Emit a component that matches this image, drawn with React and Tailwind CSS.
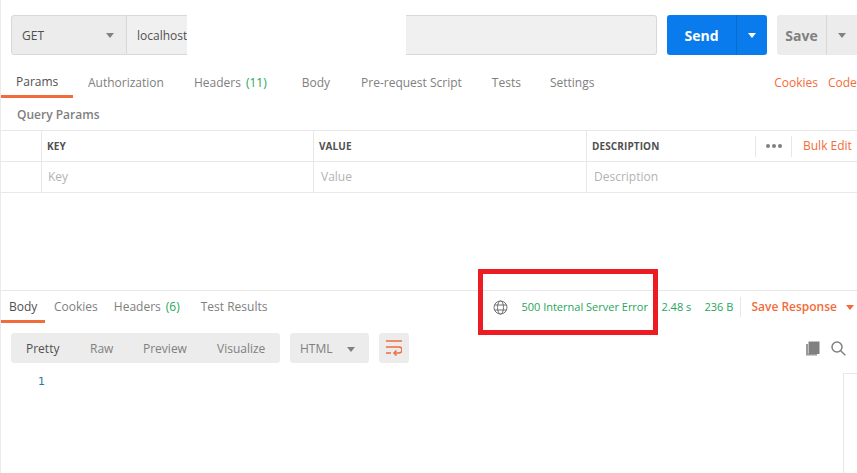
const Caret = ({ c = "border-t-[#808080]" }) => (
  <span className={`block w-0 h-0 border-l-[4px] border-r-[4px] border-t-[5px] border-l-transparent border-r-transparent ${c}`} />
);

const TopTab = ({ children, className = "" }) => (
  <div className={`h-[32px] flex items-center text-[#808080] ${className}`}>{children}</div>
);

export default function App() {
  return (
    <div className="relative w-[857px] h-[473px] overflow-hidden bg-white border-l border-[#eaeaea] text-[12px] text-[#808080] font-['Open_Sans',sans-serif]">
      {/* request bar */}
      <div className="flex h-10 mt-[15px] ml-[10px]">
        <div className="w-[116px] flex items-center justify-between pt-px pl-[10px] pr-3 bg-[#ececec] border border-[#d8d8d8] rounded-l-[3px] text-[#505050] font-medium">
          <span>GET</span>
          <Caret />
        </div>
        <div className="relative w-[530px] flex items-center pt-px pl-[10px] bg-[#f0f0f0] border border-l-0 border-[#d8d8d8] rounded-r-[3px] text-[#505050]">
          <span>localhost</span>
          <div className="absolute left-[60px] -top-px -bottom-px w-[219px] bg-white" />
        </div>
        <div className="ml-[10px] w-[100px] flex bg-[#097bed] rounded-[3px] text-white">
          <div className="w-[70px] flex items-center justify-center text-[14px] font-bold border-r border-[#0a6bcc]">Send</div>
          <div className="flex-1 flex items-center justify-center"><Caret c="border-t-white" /></div>
        </div>
        <div className="ml-[10px] w-[80px] flex bg-[#ececec] rounded-l-[3px]">
          <div className="w-[50px] flex items-center justify-center text-[14px] font-bold text-[#808080] border-r border-[#d8d8d8]">Save</div>
          <div className="flex-1 flex items-center justify-center"><Caret /></div>
        </div>
      </div>

      {/* request tabs */}
      <div className="flex items-start mt-3 h-[31px]">
        <TopTab className="px-[15px] pt-[2px] w-[72px] border-b-[3px] border-[#f26b3a] !h-[31px] !text-[#505050]">Params</TopTab>
        <TopTab className="ml-[15px]">Authorization</TopTab>
        <TopTab className="ml-[30px]">Headers<span className="ml-[5px] text-[#26a65b]">(11)</span></TopTab>
        <TopTab className="ml-[35px]">Body</TopTab>
        <TopTab className="ml-[31px]">Pre-request Script</TopTab>
        <TopTab className="ml-[30px]">Tests</TopTab>
        <TopTab className="ml-[29px]">Settings</TopTab>
        <TopTab className="ml-auto mr-[10px] !text-[#f26b3a]">Cookies</TopTab>
        <TopTab className="w-[29px] !text-[#f26b3a]">Code</TopTab>
      </div>

      {/* query params */}
      <div className="h-[32px] flex items-center pl-4 font-semibold text-[#808080] mt-px">Query Params</div>
      <div className="border-t border-[#e8e8e8] -mt-px">
        <div className="flex h-[31px] border-b border-[#e8e8e8] text-[10px] font-bold tracking-[0.1px] text-[#505050]">
          <div className="w-[41px] border-r border-[#e8e8e8]" />
          <div className="w-[272px] flex items-center pl-[5px] border-r border-[#e8e8e8]">KEY</div>
          <div className="w-[273px] flex items-center pl-[5px] border-r border-[#e8e8e8]">VALUE</div>
          <div className="flex-1 flex items-center pl-[5px]">
            <span className="w-[163px]">DESCRIPTION</span>
            <div className="h-[21px] w-[37px] flex items-center justify-center gap-[2px] border-x border-[#e8e8e8]">
              <span className="w-1 h-1 rounded-full bg-[#808080]" />
              <span className="w-1 h-1 rounded-full bg-[#808080]" />
              <span className="w-1 h-1 rounded-full bg-[#808080]" />
            </div>
            <span className="ml-[11px] text-[12px] font-normal tracking-normal text-[#f26b3a]">Bulk Edit</span>
          </div>
        </div>
        <div className="flex h-[31px] border-b border-[#e8e8e8] text-[#b3b3b3]">
          <div className="w-[41px] border-r border-[#e8e8e8]" />
          <div className="w-[272px] flex items-center pl-[6px] border-r border-[#e8e8e8]">Key</div>
          <div className="w-[273px] flex items-center pl-[7px] border-r border-[#e8e8e8]">Value</div>
          <div className="flex-1 flex items-center pl-[7px]">Description</div>
        </div>
      </div>

      {/* response */}
      <div className="mt-[97px] border-t border-[#e8e8e8]">
        <div className="flex items-start h-[32px]">
          <div className="h-[32px] w-[44px] pl-2 pt-[3px] flex items-center border-b-[3px] border-[#f26b3a] text-[#505050]">Body</div>
          <div className="h-[32px] ml-[9px] flex items-center">Cookies</div>
          <div className="h-[32px] ml-[16px] flex items-center">Headers<span className="ml-[5px] text-[#26a65b]">(6)</span></div>
          <div className="h-[32px] ml-[21px] flex items-center">Test Results</div>
          <div className="h-[32px] ml-auto flex items-center">
            <svg width="15" height="15" viewBox="0 0 15 15" fill="none" stroke="#707070" strokeWidth="1" className="mr-[13px]">
              <circle cx="7.5" cy="7.5" r="6.5" />
              <ellipse cx="7.5" cy="7.5" rx="3" ry="6.5" />
              <path d="M1.5 5h12M1.5 10h12" />
            </svg>
            <span className="w-[140px] text-[#26a65b] text-[11px]">500 Internal Server Error</span>
            <span className="w-[43px] text-[#26a65b] text-[11px]">2.48 s</span>
            <span className="w-[36px] text-[#26a65b] text-[11px]">236 B</span>
            <div className="w-px h-5 bg-[#e8e8e8]" />
            <span className="ml-[10px] text-[#f26b3a] font-semibold">Save Response</span>
            <span className="ml-[9px] mr-[3px]"><Caret c="border-t-[#f26b3a]" /></span>
          </div>
        </div>

        <div className="flex items-center h-[30px] mt-[10px] ml-[10px]">
          <div className="w-[269px] h-full flex items-center bg-[#ececec] rounded-[3px] pl-[15px] pt-[2px]">
            <span className="text-[#505050] w-[64px]">Pretty</span>
            <span className="w-[53px]">Raw</span>
            <span className="w-[74px]">Preview</span>
            <span>Visualize</span>
          </div>
          <div className="ml-[10px] w-[79px] h-full flex items-center justify-between bg-[#ececec] rounded-[3px] pl-[10px] pr-[14px] pt-[2px]">
            <span>HTML</span>
            <Caret />
          </div>
          <div className="ml-[10px] w-[30px] h-full flex items-center justify-center bg-[#ececec] rounded-[3px]">
            <svg width="16" height="16" viewBox="0 0 16 16" fill="none" stroke="#f26b3a" strokeWidth="1.5">
              <path d="M0 1h16M0 7h13a3 3 0 0 1 0 6H8M0 13h5" />
              <path d="M10.5 10.5 8 13l2.5 2.5" />
            </svg>
          </div>
          <svg width="15" height="15" viewBox="0 0 15 15" className="ml-[396px]">
            <path d="M1 3h2v9.5h9V14.5H1z" fill="#9a9a9a" />
            <path d="M3.5 0.5H14.5V13H3.5z" fill="#808080" />
          </svg>
          <svg width="15" height="15" viewBox="0 0 15 15" fill="none" stroke="#808080" strokeWidth="1.5" className="ml-[11px]">
            <circle cx="6" cy="6" r="5" />
            <path d="m9.7 9.7 4.6 4.6" />
          </svg>
        </div>

        <div className="relative mt-[10px] h-[100px]">
          <span className="absolute left-[37px] top-0 font-['DejaVu_Sans',sans-serif] text-[11px] text-[#2c7a9e] leading-[17px]">1</span>
          <div className="absolute left-[842px] top-0 bottom-0 w-[14px] border-l border-t border-[#e8e8e8]" />
        </div>
      </div>

      {/* red annotation */}
      <div className="absolute left-[477px] top-[269px] w-[180px] h-[66px] border-[5px] border-[#ed1c24]" />
    </div>
  );
}
